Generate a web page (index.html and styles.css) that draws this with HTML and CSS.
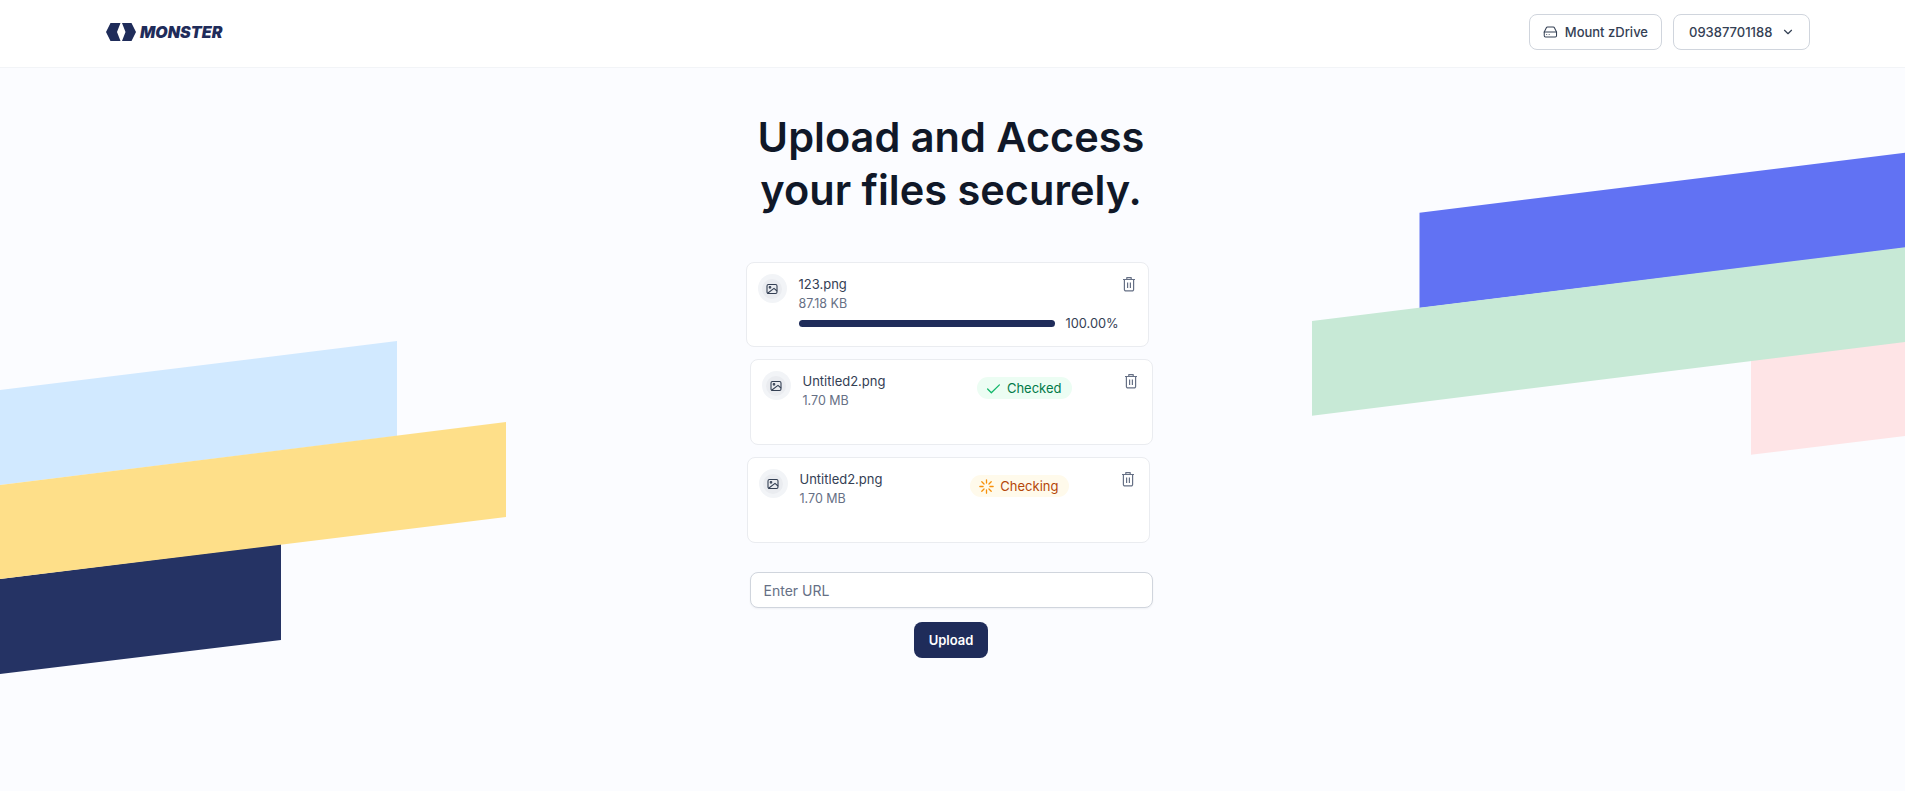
FILE: index.html
```html
<!DOCTYPE html>
<html>
<head>
	<meta charset="utf-8">
	<title>Monster</title>
	<link rel="stylesheet" href="styles.css">
</head>
<body>
	<!-- background stripes -->
	<svg class="stripes" width="1905" height="791" viewBox="0 0 1905 791">
		<polygon fill="#d1e9ff" points="0,390 397,341 397,436 0,485"/>
		<polygon fill="#253364" points="0,579 281,544 281,640 0,674"/>
		<polygon fill="#fedf89" points="0,485 506,422 506,517 0,579"/>
		<polygon fill="#6172f3" points="1419.5,212.7 1905,152.7 1905,248 1419.5,308"/>
		<polygon fill="#fee4e6" points="1751,360 1905,341 1905,436 1751,454.7"/>
		<polygon fill="#c7e9d6" points="1312,321 1905,247.3 1905,342 1312,415.7"/>
	</svg>

	<header class="topbar">
		<a class="logo">
			<svg width="30" height="18" viewBox="0 0 30 18">
				<path fill="#1f2c5a" d="M0 9 4.5 0h10L11 9l3.5 9h-10zM16 0h9.5L30 9l-4.5 9H16l3.5-9z"/>
			</svg>
			<span class="logo-text">MONSTER</span>
		</a>
		<div class="topbar-actions">
			<button class="btn-outline btn-mount">
				<svg width="18" height="18" viewBox="0 0 24 24" fill="none" stroke="#344054" stroke-width="1.7" stroke-linecap="round" stroke-linejoin="round">
					<line x1="22" y1="12" x2="2" y2="12"/>
					<path d="M5.45 5.11 2 12v6a2 2 0 0 0 2 2h16a2 2 0 0 0 2-2v-6l-3.45-6.89A2 2 0 0 0 16.76 4H7.24a2 2 0 0 0-1.79 1.11z"/>
					<line x1="6" y1="16" x2="6.01" y2="16"/>
					<line x1="10" y1="16" x2="10.01" y2="16"/>
				</svg>
				Mount zDrive
			</button>
			<button class="btn-outline btn-phone">
				09387701188
				<svg width="14" height="14" viewBox="0 0 24 24" fill="none" stroke="#344054" stroke-width="2" stroke-linecap="round" stroke-linejoin="round">
					<path d="M6 9l6 6 6-6"/>
				</svg>
			</button>
		</div>
	</header>

	<main class="content">
		<div class="column">
			<h1 class="title">Upload and Access<br>your files securely.</h1>

			<div class="file-card card-first">
				<span class="file-icon">
					<span class="file-icon-inner">
						<svg width="12" height="12" viewBox="0 0 12 12" fill="none" stroke="#344054" stroke-width="1.1" stroke-linejoin="round">
							<rect x="1" y="1.5" width="10" height="9" rx="1.4"/>
							<circle cx="4" cy="4.3" r=".8"/>
							<path d="M1.6 10.2 8 5.4l3 2.6"/>
						</svg>
					</span>
				</span>
				<div class="file-body">
					<div class="file-name">123.png</div>
					<div class="file-size">87.18 KB</div>
					<div class="progress-row">
						<div class="progress"></div>
						<span class="progress-text">100.00%</span>
					</div>
				</div>
				<svg class="trash" width="14" height="16" viewBox="0 0 14 16" fill="none" stroke="#667085" stroke-width="1.2" stroke-linejoin="round">
					<path d="M1 3.5h12M4.8 3.3V1.6h4.4v1.7M2.4 3.5v10a1.4 1.4 0 0 0 1.4 1.4h6.4a1.4 1.4 0 0 0 1.4-1.4v-10M5.6 6.5v5.4M8.4 6.5v5.4"/>
				</svg>
			</div>

			<div class="file-card">
				<span class="file-icon">
					<span class="file-icon-inner">
						<svg width="12" height="12" viewBox="0 0 12 12" fill="none" stroke="#344054" stroke-width="1.1" stroke-linejoin="round">
							<rect x="1" y="1.5" width="10" height="9" rx="1.4"/>
							<circle cx="4" cy="4.3" r=".8"/>
							<path d="M1.6 10.2 8 5.4l3 2.6"/>
						</svg>
					</span>
				</span>
				<div class="file-body file-body-row">
					<div>
						<div class="file-name">Untitled2.png</div>
						<div class="file-size">1.70 MB</div>
					</div>
					<span class="badge badge-ok">
						<svg width="15" height="15" viewBox="0 0 14 14" fill="none" stroke="#12b76a" stroke-width="1.2" stroke-linecap="round" stroke-linejoin="round">
							<path d="M1.5 7.5 5 11 12.5 3.6"/>
						</svg>
						Checked
					</span>
				</div>
				<svg class="trash" width="14" height="16" viewBox="0 0 14 16" fill="none" stroke="#667085" stroke-width="1.2" stroke-linejoin="round">
					<path d="M1 3.5h12M4.8 3.3V1.6h4.4v1.7M2.4 3.5v10a1.4 1.4 0 0 0 1.4 1.4h6.4a1.4 1.4 0 0 0 1.4-1.4v-10M5.6 6.5v5.4M8.4 6.5v5.4"/>
				</svg>
			</div>

			<div class="file-card card-third">
				<span class="file-icon">
					<span class="file-icon-inner">
						<svg width="12" height="12" viewBox="0 0 12 12" fill="none" stroke="#344054" stroke-width="1.1" stroke-linejoin="round">
							<rect x="1" y="1.5" width="10" height="9" rx="1.4"/>
							<circle cx="4" cy="4.3" r=".8"/>
							<path d="M1.6 10.2 8 5.4l3 2.6"/>
						</svg>
					</span>
				</span>
				<div class="file-body file-body-row">
					<div>
						<div class="file-name">Untitled2.png</div>
						<div class="file-size">1.70 MB</div>
					</div>
					<span class="badge badge-wait">
						<svg width="15" height="15" viewBox="0 0 14 14" fill="none" stroke="#f79009" stroke-width="1.2" stroke-linecap="round">
							<path d="M7 .8v3M7 10.2v3M.8 7h3M10.2 7h3M2.6 2.6l2.1 2.1M9.3 9.3l2.1 2.1M2.6 11.4l2.1-2.1M9.3 4.7l2.1-2.1"/>
						</svg>
						Checking
					</span>
				</div>
				<svg class="trash" width="14" height="16" viewBox="0 0 14 16" fill="none" stroke="#667085" stroke-width="1.2" stroke-linejoin="round">
					<path d="M1 3.5h12M4.8 3.3V1.6h4.4v1.7M2.4 3.5v10a1.4 1.4 0 0 0 1.4 1.4h6.4a1.4 1.4 0 0 0 1.4-1.4v-10M5.6 6.5v5.4M8.4 6.5v5.4"/>
				</svg>
			</div>

			<input class="url-input" type="text" placeholder="Enter URL">
			<button class="btn-upload">Upload</button>
		</div>
	</main>
</body>
</html>
```

FILE: styles.css
```css
html,body{
	height:100%;
}
body{
	margin:0;
	position:relative;
	overflow:hidden;
	background:#fbfcff;
	font-family:Inter,"Noto Sans",sans-serif;
	color:#101828;
}
.stripes{
	position:absolute;
	top:0;
	left:0;
}

/* top bar */
.topbar{
	position:relative;
	height:64px;
	display:flex;
	align-items:center;
	justify-content:space-between;
	padding:0 95px 3px 106px;
	background:#fff;
	border-bottom:1px solid #f2f4f7;
}
.logo{
	display:flex;
	align-items:center;
	gap:4px;
}
.logo-text{
	font-size:16px;
	font-weight:900;
	font-style:italic;
	color:#1f2c5a;
}
.topbar-actions{
	display:flex;
	gap:11px;
}
.btn-outline{
	height:36px;
	display:flex;
	align-items:center;
	white-space:nowrap;
	background:#fff;
	border:1px solid #d0d5dd;
	border-radius:8px;
	font-family:inherit;
	font-size:13px;
	font-weight:500;
	color:#344054;
}
.btn-mount{
	width:133px;
	padding:0 13px;
	gap:7px;
}
.btn-phone{
	width:137px;
	padding:0 12px 0 15px;
	gap:9px;
}

/* upload column */
.content{
	position:relative;
	display:flex;
	justify-content:center;
	padding:43px 3px 0 0;
}
.column{
	width:403px;
	display:flex;
	flex-direction:column;
}
.title{
	margin:0 0 45px;
	font-size:41.5px;
	line-height:53px;
	font-weight:600;
	text-align:center;
	white-space:nowrap;
	color:#101828;
}
.file-card{
	width:403px;
	height:86px;
	box-sizing:border-box;
	margin-bottom:12px;
	padding:11px 14px 0 11px;
	display:flex;
	background:#fff;
	border:1px solid #eaecf0;
	border-radius:8px;
}
.card-first{
	height:85px;
	margin-left:-4px;
	padding-right:19px;
}
.card-third{
	margin-left:-3px;
}
.file-icon{
	width:29px;
	height:29px;
	flex:none;
	display:flex;
	align-items:center;
	justify-content:center;
	background:#f2f4f7;
	border-radius:50%;
}
.file-icon-inner{
	width:20px;
	height:20px;
	display:flex;
	align-items:center;
	justify-content:center;
	background:#eaecf0;
	border-radius:50%;
}
.file-body{
	flex:1;
	margin:1px 3px 0 12px;
}
.file-body-row{
	display:flex;
	justify-content:space-between;
	align-items:flex-start;
}
.file-name{
	font-size:13px;
	line-height:19px;
	color:#344054;
}
.file-size{
	font-size:12.5px;
	line-height:19px;
	color:#667085;
}
.progress-row{
	display:flex;
	align-items:center;
	gap:11px;
	margin-top:3px;
}
.progress{
	width:256px;
	height:7px;
	background:#1f2c5a;
	border-radius:4px;
}
.progress-text{
	font-size:12.8px;
	color:#344054;
}
.trash{
	flex:none;
	margin-top:2px;
}
.badge{
	display:flex;
	align-items:center;
	gap:6px;
	height:22px;
	margin:5px 49px 0 0;
	padding:0 10px 0 9px;
	border-radius:11px;
	font-size:13px;
}
.badge-ok{
	background:#ecfdf3;
	color:#027a48;
}
.badge-wait{
	background:#fffaeb;
	color:#b54708;
}
.url-input{
	height:36px;
	box-sizing:border-box;
	margin-top:17px;
	padding:0 13px;
	background:#fff;
	border:1px solid #d0d5dd;
	border-radius:8px;
	box-shadow:0 1px 2px rgba(16,24,40,.05);
	outline:none;
	font-family:inherit;
	font-size:14px;
}
.url-input::placeholder{
	color:#667085;
}
.btn-upload{
	width:74px;
	height:36px;
	margin:14px auto 0;
	background:#1f2c5a;
	border:none;
	border-radius:8px;
	font-family:inherit;
	font-size:13px;
	font-weight:600;
	color:#fff;
}
```
